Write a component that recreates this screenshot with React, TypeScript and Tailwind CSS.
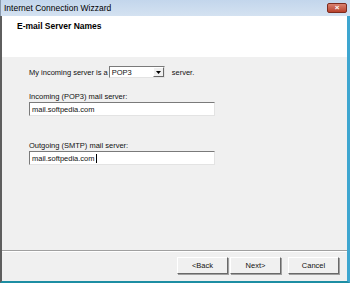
function Btn({ label, className = '' }: { readonly label: string; readonly className?: string }) {
  return (
    <button
      className={`h-[17px] w-[51px] bg-[#f0f0f0] border border-t-white border-l-white border-r-[#696969] border-b-[#696969] shadow-[1px_1px_0_#a0a0a0] text-[7.5px] leading-none text-[#111] ${className}`}
    >
      {label}
    </button>
  )
}

function Field({ value, caret = false }: { readonly value: string; readonly caret?: boolean }) {
  return (
    <div className="h-[14px] w-[186px] bg-white border border-t-[#7a7a7a] border-l-[#7a7a7a] border-r-[#e3e3e3] border-b-[#e3e3e3] flex items-center pl-[2px] text-[7.5px] text-[#111]">
      {value}
      {caret && <span className="ml-[1px] h-[9px] w-px bg-black" />}
    </div>
  )
}

export default function App() {
  return (
    <div className="w-[350px] h-[283px] overflow-hidden flex flex-col bg-[#f0f0f0] font-['Liberation_Sans',Arial,sans-serif]">
      {/* Title bar */}
      <div className="h-[16px] shrink-0 flex items-center justify-between bg-gradient-to-b from-[#c3d6ec] to-[#d4e2f1] border-l border-l-[#8a9aae] pl-[3px] pr-[3px]">
        <span className="text-[8.5px] text-black leading-none">Internet Connection Wizzard</span>
        <div className="h-[10px] w-[20px] rounded-[2px] bg-gradient-to-b from-[#d9816f] to-[#b8412c] border border-[#7d2b1e] flex items-center justify-center text-white text-[8px] font-bold leading-none">
          ×
        </div>
      </div>

      <div className="flex-1 flex flex-col border-l-2 border-l-[#5e5e5e] border-r-[3px] border-r-[#3ea6d0] border-b-2 border-b-[#1d8ea3]">
        {/* Header */}
        <div className="h-[41px] shrink-0 bg-white pl-[15px] pt-[6px] text-[8.5px] font-bold text-black leading-[9px]">
          E-mail Server Names
        </div>

        {/* Body */}
        <div className="flex-1 pl-[27px] pt-[9px] text-[7.5px] text-[#111] leading-[9px]">
          <div className="flex items-center h-[12px]">
            <span>My incoming server is a</span>
            <div className="ml-[1px] h-[12px] w-[56px] bg-white border border-t-[#7a7a7a] border-l-[#7a7a7a] border-r-[#e3e3e3] border-b-[#e3e3e3] flex items-center">
              <span className="flex-1 pl-[2px]">POP3</span>
              <div className="h-[10px] w-[11px] bg-[#f0f0f0] border border-t-white border-l-white border-r-[#696969] border-b-[#696969] flex items-center justify-center">
                <svg width="5" height="3" viewBox="0 0 5 3">
                  <path d="M0 0h5L2.5 3z" fill="#000" />
                </svg>
              </div>
            </div>
            <span className="ml-[7px]">server.</span>
          </div>

          <div className="mt-[14px]">Incoming (POP3) mail server:</div>
          <div className="mt-[1px]">
            <Field value="mail.softpedia.com" />
          </div>

          <div className="mt-[25px]">Outgoing (SMTP) mail server:</div>
          <div className="mt-[1px]">
            <Field value="mail.softpedia.com" caret />
          </div>
        </div>

        {/* Footer */}
        <div className="h-[31px] shrink-0 border-t border-t-[#a0a0a0] shadow-[inset_0_1px_0_#fff] flex justify-end pt-[6px] pr-[8px]">
          <Btn label="<Back" />
          <Btn label="Next>" className="ml-[2px]" />
          <Btn label="Cancel" className="ml-[7px]" />
        </div>
      </div>
    </div>
  )
}
